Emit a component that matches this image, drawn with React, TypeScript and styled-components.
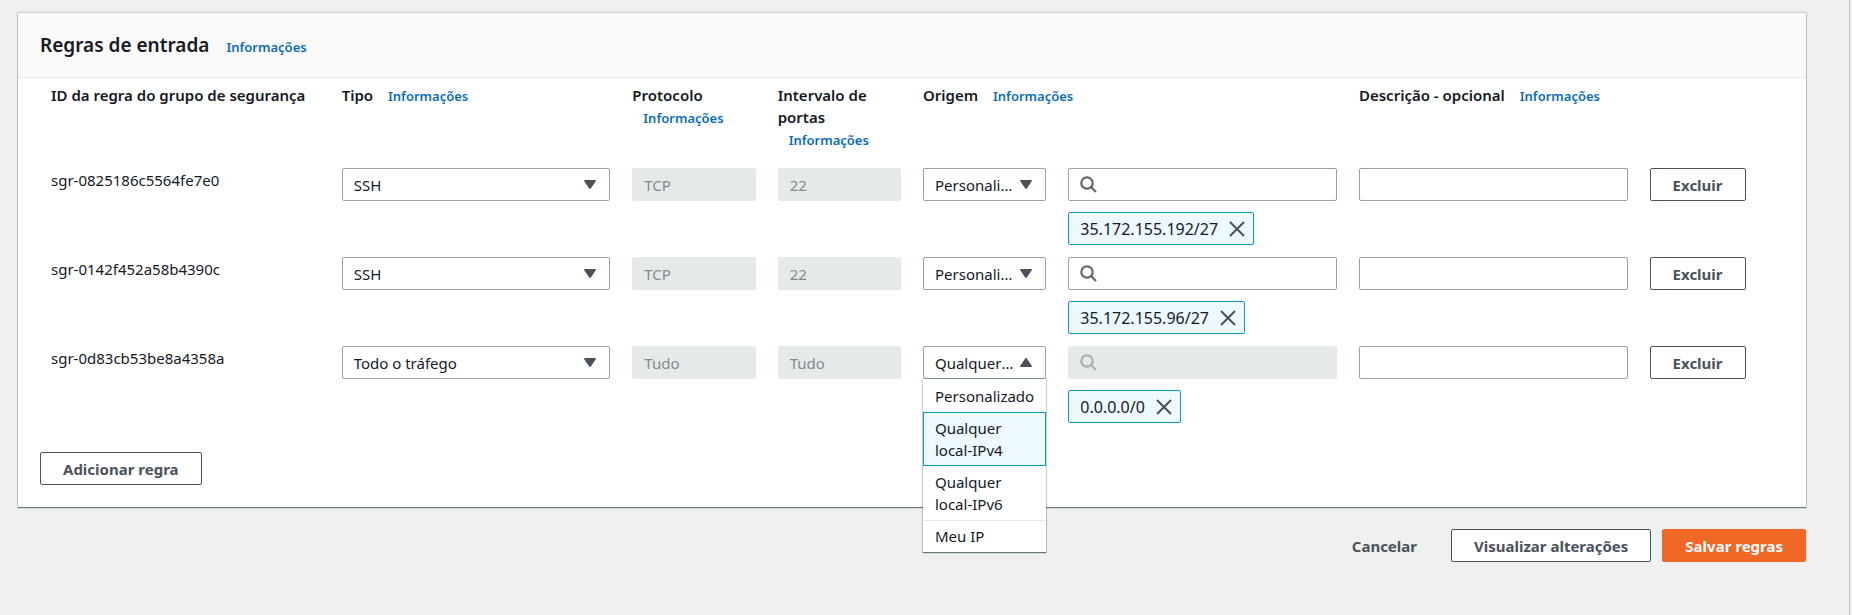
import React, { useId, useState } from "react";
import styled, { createGlobalStyle, css } from "styled-components";

const color = {
  page: "#eff1f0",
  panel: "#ffffff",
  head: "#fafafa",
  text: "#16191f",
  muted: "#4b525b",
  line: "#e4e8e8",
  field: "#95a5a6",
  fieldAlt: "#a3b1b2",
  disabled: "#e6e9e9",
  disabledText: "#7f8c8d",
  link: "#0a6db8",
  accent: "#0a98c4",
  accentBg: "#edf8ff",
  orange: "#f06726",
};

const GlobalStyle = createGlobalStyle`
  *, *::before, *::after { box-sizing: border-box; }
  body {
    margin: 0;
    background: ${color.page};
    color: ${color.text};
    font-family: "Noto Sans", "Open Sans", sans-serif;
    font-size: 15px;
    line-height: 22px;
  }
  button, input, select { font: inherit; color: inherit; }
`;

const Page = styled.main`
  min-height: 100vh;
  margin-right: 2px;
  padding: 13px 43px 52px 18px;
  border-right: 1px solid #c3c7c7;
`;

const raised = css`
  box-shadow: 0 1px 1px rgba(0, 28, 36, 0.5), 0 0 1px 1px rgba(0, 28, 36, 0.14);
`;

const Panel = styled.section`
  ${raised}
  background: ${color.panel};
`;

const PanelHead = styled.header`
  display: flex;
  align-items: baseline;
  gap: 17px;
  padding: 18px 22px;
  background: ${color.head};
  border-bottom: 1px solid ${color.line};
`;

const Title = styled.h2`
  margin: 0;
  font-size: 19px;
  line-height: 28px;
  font-weight: 600;
`;

const InfoLink = styled.a`
  color: ${color.link};
  font-size: 13px;
  line-height: 16px;
  font-weight: 600;
  text-decoration: none;
`;

const PanelBody = styled.div`
  padding: 0 22px 22px;
`;

const RulesTable = styled.table`
  width: 100%;
  table-layout: fixed;
  border-collapse: collapse;
  margin-bottom: 17px;
`;

const HeadCell = styled.th`
  padding: 6px 11px 18px;
  text-align: left;
  vertical-align: top;
  font-weight: 600;

  ${InfoLink} { margin-left: 11px; }
`;

const Cell = styled.td`
  padding: 0 11px 12px;
  vertical-align: top;
`;

const RuleId = styled.div`
  line-height: 24px;
`;

const fieldBox = css`
  display: block;
  width: 100%;
  height: 33px;
  border: 1px solid ${color.field};
  border-radius: 2px;
  background: ${color.panel};
`;

const TextInput = styled.input<{ $icon?: boolean }>`
  ${fieldBox}
  padding: 0 11px 0 ${(p) => (p.$icon ? "36px" : "11px")};

  &:disabled {
    border-color: ${color.disabled};
    background: ${color.disabled};
    color: ${color.disabledText};
  }
`;

const FieldWrap = styled.div`
  position: relative;
`;

const Select = styled.select`
  ${fieldBox}
  appearance: none;
  padding: 0 30px 0 11px;
  text-overflow: ellipsis;
  white-space: nowrap;
  overflow: hidden;
`;

const Caret = styled.svg<{ $up?: boolean }>`
  position: absolute;
  top: 12px;
  right: 14px;
  width: 12px;
  height: 9px;
  fill: ${color.muted};
  pointer-events: none;
  transform: ${(p) => (p.$up ? "rotate(180deg)" : "none")};
`;

const SearchGlyph = styled.svg<{ $off?: boolean }>`
  position: absolute;
  top: 8px;
  left: 12px;
  width: 17px;
  height: 17px;
  fill: none;
  stroke: ${(p) => (p.$off ? color.fieldAlt : "#5f676f")};
  stroke-width: 2.2;
  pointer-events: none;
`;

const Tag = styled.span`
  display: inline-flex;
  align-items: center;
  gap: 11px;
  height: 33px;
  margin-top: 11px;
  padding: 0 8px 0 11px;
  vertical-align: top;
  font-size: 16px;
  border: 1px solid ${color.accent};
  border-radius: 2px;
  background: ${color.accentBg};
`;

const TagClose = styled.button`
  display: block;
  padding: 0;
  border: 0;
  background: none;
  color: ${color.muted};
  cursor: pointer;

  svg { display: block; width: 16px; height: 16px; fill: none; stroke: currentColor; stroke-width: 2; }
`;

const Menu = styled.ul`
  ${raised}
  position: absolute;
  z-index: 1;
  top: 33px;
  left: 0;
  right: 0;
  margin: 0;
  padding: 1px 0 0;
  list-style: none;
  background: ${color.panel};
`;

const Option = styled.li<{ $selected?: boolean }>`
  padding: 4px 11px;
  border: 1px solid ${(p) => (p.$selected ? color.accent : "transparent")};
  background: ${(p) => (p.$selected ? color.accentBg : "none")};

  &:last-child { border-top-color: ${color.line}; }
`;

const Button = styled.button<{ $kind?: "primary" | "link" }>`
  height: 33px;
  padding: 0 22px;
  border: 1px solid ${color.muted};
  border-radius: 2px;
  background: ${color.panel};
  color: ${color.muted};
  font-weight: 700;
  white-space: nowrap;
  cursor: pointer;

  ${(p) => p.$kind === "primary" && css`
    border-color: ${color.orange};
    background: ${color.orange};
    color: #ffffff;
  `}
  ${(p) => p.$kind === "link" && css`
    border-color: transparent;
    background: none;
  `}
`;

const Actions = styled.div`
  display: flex;
  justify-content: flex-end;
  gap: 11px;
  margin-top: 22px;
`;

const TYPES = ["SSH", "Todo o tráfego", "HTTP", "HTTPS"];
const SOURCES = ["Personalizado", "Qualquer local-IPv4", "Qualquer local-IPv6", "Meu IP"];

type Rule = {
  id: string;
  type: string;
  protocol: string;
  ports: string;
  source: string;
  cidr: string;
  locked?: boolean;
  open?: boolean;
};

const RULES: Rule[] = [
  { id: "sgr-0825186c5564fe7e0", type: "SSH", protocol: "TCP", ports: "22", source: "Personalizado", cidr: "35.172.155.192/27" },
  { id: "sgr-0142f452a58b4390c", type: "SSH", protocol: "TCP", ports: "22", source: "Personalizado", cidr: "35.172.155.96/27" },
  { id: "sgr-0d83cb53be8a4358a", type: "Todo o tráfego", protocol: "Tudo", ports: "Tudo", source: "Qualquer local-IPv4", cidr: "0.0.0.0/0", locked: true, open: true },
];

const COLUMN_UNITS = [2, 2, 1, 1, 1, 2, 2, 1];

function Info() {
  return <InfoLink href="#info">Informações</InfoLink>;
}

function Dropdown({ label, options, initial, open }: { label: string; options: string[]; initial: string; open?: boolean }) {
  const [value, setValue] = useState(initial);
  const id = useId();
  return (
    <FieldWrap>
      <Select aria-label={label} id={id} value={value} onChange={(e) => setValue(e.target.value)}>
        {options.map((o) => <option key={o}>{o}</option>)}
      </Select>
      <Caret $up={open} viewBox="0 0 12 9" aria-hidden="true">
        <path d="M1 0h10c.8 0 1.200.7.800 1.300l-5 7.200c-.4.600-1.200.600-1.600 0l-5-7.200C-.2.700.2 0 1 0z" />
      </Caret>
      {open && (
        <Menu role="listbox" aria-label={label}>
          {options.map((o) => (
            <Option key={o} role="option" aria-selected={o === value} $selected={o === value} onClick={() => setValue(o)}>
              {o}
            </Option>
          ))}
        </Menu>
      )}
    </FieldWrap>
  );
}

function RuleRow({ rule }: { rule: Rule }) {
  return (
    <tr>
      <Cell><RuleId>{rule.id}</RuleId></Cell>
      <Cell><Dropdown label="Tipo" options={TYPES} initial={rule.type} /></Cell>
      <Cell><TextInput aria-label="Protocolo" defaultValue={rule.protocol} disabled /></Cell>
      <Cell><TextInput aria-label="Intervalo de portas" defaultValue={rule.ports} disabled /></Cell>
      <Cell><Dropdown label="Origem" options={SOURCES} initial={rule.source} open={rule.open} /></Cell>
      <Cell>
        <FieldWrap>
          <TextInput aria-label="Buscar origem" $icon disabled={rule.locked} />
          <SearchGlyph $off={rule.locked} viewBox="0 0 17 17" aria-hidden="true">
            <circle cx="7" cy="7" r="5.700" />
            <path d="M11 11l5 5" />
          </SearchGlyph>
        </FieldWrap>
        <Tag>
          {rule.cidr}
          <TagClose type="button" aria-label={`Remover ${rule.cidr}`}>
            <svg viewBox="0 0 16 16" aria-hidden="true"><path d="M1 1l14 14M15 1L1 15" /></svg>
          </TagClose>
        </Tag>
      </Cell>
      <Cell><TextInput aria-label="Descrição - opcional" /></Cell>
      <Cell><Button type="button">Excluir</Button></Cell>
    </tr>
  );
}

export default function App() {
  return (
    <>
      <GlobalStyle />
      <Page>
        <Panel>
          <PanelHead>
            <Title>Regras de entrada</Title>
            <Info />
          </PanelHead>
          <PanelBody>
            <RulesTable>
              <colgroup>
                {COLUMN_UNITS.map((units, i) => <col key={i} style={{ width: `${(units / 12) * 100}%` }} />)}
              </colgroup>
              <thead>
                <tr>
                  <HeadCell scope="col">ID da regra do grupo de segurança</HeadCell>
                  <HeadCell scope="col">Tipo <Info /></HeadCell>
                  <HeadCell scope="col">Protocolo <Info /></HeadCell>
                  <HeadCell scope="col">Intervalo de portas <Info /></HeadCell>
                  <HeadCell scope="col" colSpan={2}>Origem <Info /></HeadCell>
                  <HeadCell scope="col" colSpan={2}>Descrição - opcional <Info /></HeadCell>
                </tr>
              </thead>
              <tbody>
                {RULES.map((rule) => <RuleRow key={rule.id} rule={rule} />)}
              </tbody>
            </RulesTable>
            <Button type="button">Adicionar regra</Button>
          </PanelBody>
        </Panel>
        <Actions>
          <Button type="button" $kind="link">Cancelar</Button>
          <Button type="button">Visualizar alterações</Button>
          <Button type="button" $kind="primary">Salvar regras</Button>
        </Actions>
      </Page>
    </>
  );
}
